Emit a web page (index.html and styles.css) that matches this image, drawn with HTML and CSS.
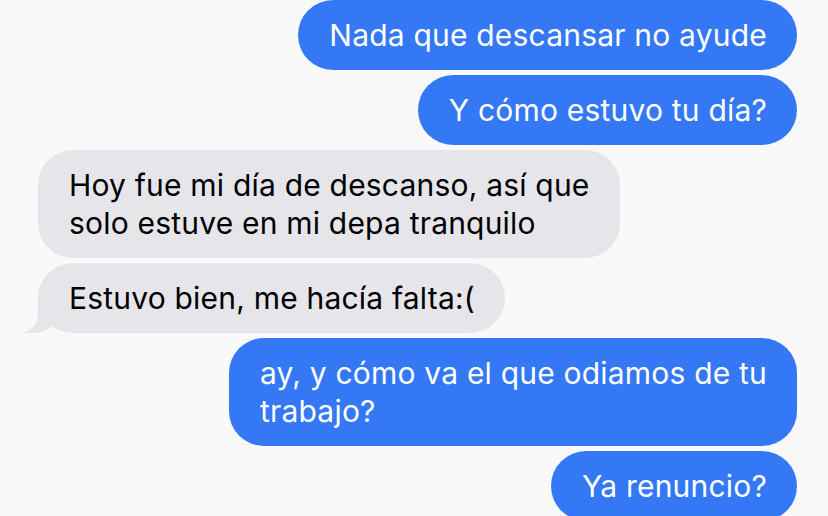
FILE: index.html
```html
<!DOCTYPE html>
<html lang="es">

<head>
    <meta charset="UTF-8">
    <meta name="viewport" content="width=device-width, initial-scale=1.0">
    <title>Mensajes</title>
    <link rel="stylesheet" href="styles.css">
</head>

<body>

    <div class="thread">
        <div class="msg sent">Nada que descansar no ayude</div>
        <div class="msg sent">Y cómo estuvo tu día?</div>
        <div class="msg received">Hoy fue mi día de descanso, así que<br>solo estuve en mi depa tranquilo</div>
        <div class="msg received tail">Estuvo bien, me hacía falta:(</div>
        <div class="msg sent">ay, y cómo va el que odiamos de tu<br>trabajo?</div>
        <div class="msg sent">Ya renuncio?</div>
    </div>

</body>

</html>
```

FILE: styles.css
```css
body {
    margin: 0;
    background: #f9f9f9;
    font-family: Inter, "Noto Sans", sans-serif;
    overflow: hidden;
}

.thread {
    display: flex;
    flex-direction: column;
    gap: 5px;
    padding: 0 31px 0 38px;
}

.msg {
    position: relative;
    width: fit-content;
    padding: 16px 30px 16px 31px;
    font-size: 30px;
    line-height: 38px;
    letter-spacing: 0.2px;
    border-radius: 35px;
}

.sent {
    align-self: flex-end;
    background: #3478f6;
    color: #fff;
}

.received {
    align-self: flex-start;
    background: #e5e5ea;
    color: #000;
}

/* little tail on the last bubble of a group */
.tail::before {
    content: "";
    position: absolute;
    bottom: 0;
    left: -18px;
    width: 40px;
    height: 34px;
    background: #e5e5ea;
    border-bottom-right-radius: 26px 24px;
}

.tail::after {
    content: "";
    position: absolute;
    bottom: 0;
    left: -30px;
    width: 30px;
    height: 36px;
    background: #f9f9f9;
    border-bottom-right-radius: 20px 18px;
}
```
